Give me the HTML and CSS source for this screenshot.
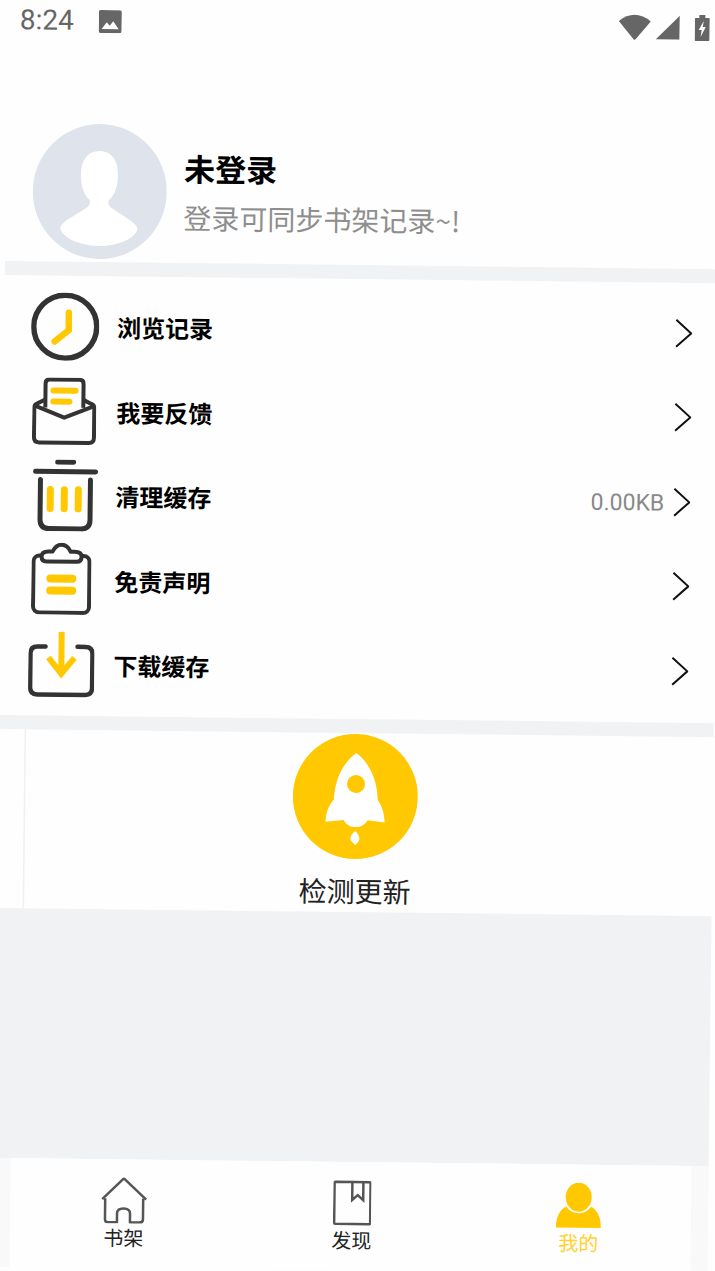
FILE: index.html
```html
<!DOCTYPE html>
<html lang="zh-CN">
<head>
<meta charset="UTF-8">
<meta name="viewport" content="width=device-width, initial-scale=1.0">
<title>我的</title>
<link rel="stylesheet" href="styles.css">
</head>
<body>
<div class="page">

    <div class="status">
        <span class="status-time">8:24</span>
        <svg class="status-pic" width="23" height="23" viewBox="0 0 23 23">
            <rect width="23" height="23" rx="2" fill="#666"/>
            <path d="M3 19 L8 12 L11 15.5 L14.5 11 L20 19Z" fill="#fff"/>
        </svg>
        <span class="status-space"></span>
        <svg class="status-wifi" width="32" height="26" viewBox="0 0 32 26">
            <path d="M0 7 Q16 -6 32 7 L17 25 Q16 26 15 25Z" fill="#666"/>
        </svg>
        <svg class="status-signal" width="24" height="24" viewBox="0 0 24 24">
            <path d="M24 0 V24 H0Z" fill="#666"/>
        </svg>
        <svg class="status-battery" width="15" height="26" viewBox="0 0 15 26">
            <path d="M4.5 0 H10.5 V3 H14 Q15 3 15 4 V25 Q15 26 14 26 H1 Q0 26 0 25 V4 Q0 3 1 3 H4.5Z" fill="#666"/>
            <path d="M9 6 L4 15 H7 L6 22 L11 12 H8Z" fill="#fff"/>
        </svg>
    </div>

    <div class="profile">
        <svg class="avatar" width="134" height="135" viewBox="0 0 134 135">
            <ellipse cx="67" cy="67.5" rx="67" ry="67.5" fill="#dfe4ec"/>
            <path d="M66.5 27 C55 27 48 36 48 50 C48 63 51 71 57 76 C58 79 57 81 55 83 C44 91 29 98 28 104 C28 112 45 122 66.5 122 C88 122 105 112 105 104 C104 98 89 91 78 83 C76 81 75 79 76 76 C82 71 85 63 85 50 C85 36 78 27 66.5 27Z" fill="#fff"/>
        </svg>
        <div class="profile-text">
            <div class="profile-name">未登录</div>
            <div class="profile-tip">登录可同步书架记录~!</div>
        </div>
    </div>

    <div class="band"></div>

    <div class="menu">
        <div class="row">
            <span class="row-icon">
                <svg width="68" height="68" viewBox="0 0 68 68" fill="none">
                    <circle cx="34" cy="34" r="31.5" stroke="#333" stroke-width="5.5"/>
                    <path d="M37.5 20 V37.5 L23.5 49" stroke="#ffc800" stroke-width="6.5" stroke-linecap="round"/>
                </svg>
            </span>
            <span class="row-label">浏览记录</span>
            <svg class="row-arrow" width="17" height="29" viewBox="0 0 17 29" fill="none"><path d="M1 1 L16 14.5 L1 28" stroke="#111" stroke-width="2"/></svg>
        </div>
        <div class="row">
            <span class="row-icon">
                <svg width="64" height="68" viewBox="0 0 64 68" fill="none" stroke="#333" stroke-width="4" stroke-linejoin="round">
                    <path d="M13 30 V6 Q13 2 17 2 H47 Q51 2 51 6 V30"/>
                    <path d="M13 22 L5 26 Q2 27 2 30 V60 Q2 65 7 65 H57 Q62 65 62 60 V30 Q62 27 59 26 L51 22"/>
                    <path d="M2 28 L32 40 L62 28"/>
                    <path d="M21 13 H43 M21 24 H37" stroke="#ffc800" stroke-width="6" stroke-linecap="round"/>
                </svg>
            </span>
            <span class="row-label">我要反馈</span>
            <svg class="row-arrow" width="17" height="29" viewBox="0 0 17 29" fill="none"><path d="M1 1 L16 14.5 L1 28" stroke="#111" stroke-width="2"/></svg>
        </div>
        <div class="row">
            <span class="row-icon">
                <svg class="icon-trash" width="66" height="72" viewBox="0 0 66 72" fill="none" stroke="#333" stroke-width="5" stroke-linecap="round">
                    <path d="M25 2.5 H41 M3 12 H63"/>
                    <path d="M8 20 V60 Q8 69 17 69 H49 Q58 69 58 60 V20"/>
                    <path d="M18 30 V49 M32 30 V49 M46 30 V49" stroke="#ffc800" stroke-width="7"/>
                </svg>
            </span>
            <span class="row-label">清理缓存</span>
            <span class="row-size">0.00KB</span>
            <svg class="row-arrow" width="17" height="29" viewBox="0 0 17 29" fill="none"><path d="M1 1 L16 14.5 L1 28" stroke="#111" stroke-width="2"/></svg>
        </div>
        <div class="row">
            <span class="row-icon">
                <svg class="icon-clip" width="60" height="72" viewBox="0 0 60 72" fill="none" stroke="#333" stroke-width="4" stroke-linejoin="round">
                    <rect x="2" y="13" width="56" height="57" rx="6"/>
                    <path d="M15 19 H45 Q50 19 50 14 Q50 9 43 9 H39 Q36 2 30 2 Q24 2 21 9 H17 Q10 9 10 14 Q10 19 15 19Z" fill="#fff"/>
                    <path d="M19 36 H41 M19 48 H41" stroke="#ffc800" stroke-width="8" stroke-linecap="round"/>
                </svg>
            </span>
            <span class="row-label">免责声明</span>
            <svg class="row-arrow" width="17" height="29" viewBox="0 0 17 29" fill="none"><path d="M1 1 L16 14.5 L1 28" stroke="#111" stroke-width="2"/></svg>
        </div>
        <div class="row">
            <span class="row-icon">
                <svg width="66" height="66" viewBox="0 0 66 66" fill="none" stroke="#333" stroke-width="4.5" stroke-linecap="round">
                    <path d="M17 15 H9 Q2 15 2 22 V56 Q2 63 9 63 H57 Q64 63 64 56 V22 Q64 15 57 15 H49"/>
                    <path d="M33 0 V42 M20 26 L33 42 L46 26" stroke="#ffc800" stroke-width="6" stroke-linecap="butt"/>
                </svg>
            </span>
            <span class="row-label">下载缓存</span>
            <svg class="row-arrow" width="17" height="29" viewBox="0 0 17 29" fill="none"><path d="M1 1 L16 14.5 L1 28" stroke="#111" stroke-width="2"/></svg>
        </div>
    </div>

    <div class="band"></div>

    <div class="update">
        <svg width="125" height="125" viewBox="0 0 125 125">
            <circle cx="62.5" cy="62.5" r="62.5" fill="#ffc800"/>
            <path d="M63 19 C52 27 42 42 41 66 C36 71 33 80 33 88 L51 86 C54 91 58 93 63 93 C68 93 72 91 75 86 L92 88 C92 80 89 71 85 66 C84 42 74 27 63 19Z" fill="#fff"/>
            <circle cx="63" cy="50" r="9" fill="#ffc800"/>
            <path d="M63 97 C59 100 58 103 58 105 C58 107 61 109 63 111 C65 109 67 107 67 105 C67 103 66 100 63 97Z" fill="#fff"/>
        </svg>
        <div class="update-label">检测更新</div>
    </div>

    <div class="blank"></div>

    <div class="tabs">
        <div class="tabs-inner">
            <div class="tab">
                <svg width="46" height="46" viewBox="0 0 46 46" fill="none" stroke="#555" stroke-width="2.5" stroke-linejoin="round">
                    <path d="M1 22 L22.5 1 L45 22"/>
                    <path d="M4 21 V42 Q4 45 7 45 H16 V36 Q16 31 22.5 31 Q29 31 29 36 V45 H38 Q42 45 42 42 V21"/>
                </svg>
                <span class="tab-label">书架</span>
            </div>
            <div class="tab">
                <svg width="38" height="46" viewBox="0 0 38 46" fill="none" stroke="#555" stroke-width="2.5">
                    <rect x="1.2" y="2" width="36" height="42" rx="1"/>
                    <path d="M19 2 V20 L24.5 15 L30 20 V2"/>
                </svg>
                <span class="tab-label">发现</span>
            </div>
            <div class="tab tab-on">
                <svg width="45" height="46" viewBox="0 0 45 46">
                    <ellipse cx="22.5" cy="14.5" rx="13" ry="14.5" fill="#ffc800"/>
                    <path d="M0 45 C0 34 4 27 10 24 C14 29 18 30.5 22.5 30.5 C27 30.5 31 29 35 24 C41 27 45 34 45 45Z" fill="#ffc800"/>
                </svg>
                <span class="tab-label">我的</span>
            </div>
        </div>
    </div>

</div>
</body>
</html>
```

FILE: styles.css
```css
html, body
{
    margin: 0;
    height: 100%;
    overflow: hidden;
    background: #fefefe;
}
body
{
    font-family: "Noto Sans CJK SC", "Noto Sans", sans-serif;
    color: #000;
}
/* the whole capture sits a little crooked */
.page
{
    width: 714px;
    margin-left: 8px;
    transform: rotate(0.66deg);
    transform-origin: 0 0;
    background: #fefefe;
}
.status
{
    display: flex;
    align-items: center;
    height: 40px;
    padding: 0 12px;
}
.status-time
{
    font-family: Roboto, sans-serif;
    font-size: 28px;
    line-height: 40px;
    color: #666;
}
.status-pic
{
    margin-left: 25px;
}
.status-space
{
    flex: 1;
}
.status-signal
{
    margin-left: 5px;
}
.status-battery
{
    margin-left: 15px;
}
.profile
{
    display: flex;
    align-items: flex-start;
    height: 137.5px;
    padding: 83px 0 0 27px;
}
.avatar
{
    flex: none;
}
.profile-text
{
    margin-left: 17px;
    padding-top: 23px;
}
.profile-name
{
    font-size: 31px;
    font-weight: 700;
    line-height: 40px;
}
.profile-tip
{
    margin-top: 9px;
    font-size: 28px;
    line-height: 40px;
    color: #8e8e8e;
    white-space: nowrap;
}
.band
{
    height: 14px;
    background: #f1f2f4;
}
.menu
{
    padding: 9.5px 0 8.5px;
}
.row
{
    display: flex;
    align-items: center;
    height: 84.5px;
    padding: 0 26px 0 15px;
}
.row-icon
{
    display: flex;
    justify-content: center;
    width: 92px;
    margin-right: 6px;
}
.icon-trash
{
    margin-left: 3px;
}
.icon-clip
{
    margin: 0 2px 3px 0;
}
.row-label
{
    flex: 1;
    font-size: 24px;
    font-weight: 700;
    line-height: 34px;
}
.row-arrow
{
    margin-bottom: 2px;
}
.row-size
{
    margin-right: 9px;
    font-family: Roboto, sans-serif;
    font-size: 23px;
    color: #888;
}
.update
{
    display: flex;
    flex-direction: column;
    align-items: center;
    height: 178px;
    padding: 1px 2px 0 0;
    background: linear-gradient(#f0f0f0, #f0f0f0) 25px 0 / 1.5px 100% no-repeat;
}
.update-label
{
    margin: 11px 0 0 2px;
    font-size: 28px;
    line-height: 40px;
    color: #222;
}
.blank
{
    height: 250px;
    background: #f1f2f4;
}
.tabs
{
    height: 109px;
    padding: 0 17px 0 16px;
    background: #f9f9f9;
}
.tabs-inner
{
    display: grid;
    grid-template-columns: repeat(3, 1fr);
    height: 100%;
    background: #fefefe;
}
.tab
{
    display: flex;
    flex-direction: column;
    align-items: center;
    padding-top: 18px;
}
.tab + .tab
{
    padding-left: 2px;
}
.tab-label
{
    font-size: 20px;
    line-height: 27px;
    color: #222;
}
.tab-on .tab-label
{
    color: #ffd22e;
}
```
